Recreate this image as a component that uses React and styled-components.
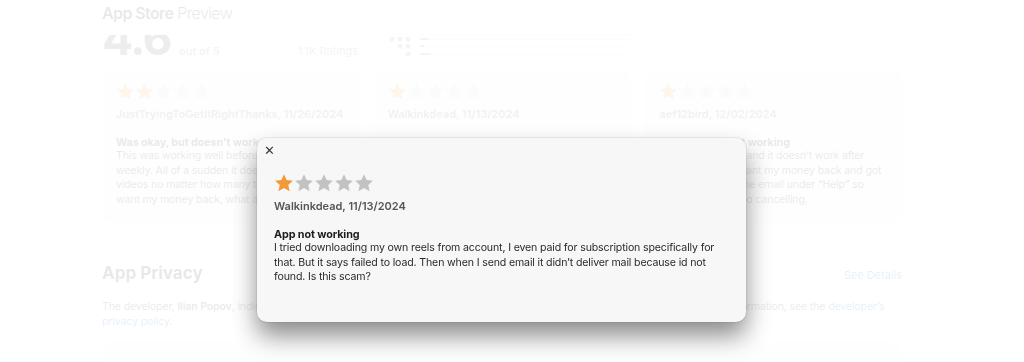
import React from 'react'
import styled, { createGlobalStyle } from 'styled-components'

const GlobalStyle = createGlobalStyle`
  html, body {
    margin: 0;
    padding: 0;
    background: #ffffff;
    font-family: Inter, "Noto Sans", "Liberation Sans", sans-serif;
    color: #1d1d1f;
    overflow: hidden;
  }
`

const reviews = [
  {
    rating: 2,
    name: 'JustTryingToGetItRightThanks, 11/26/2024',
    title: "Was okay, but doesn't work anymore",
    body: "This was working well before, I paid for it weekly. All of a sudden it doesn't download videos no matter how many times I tried, so I want my money back, what a waste of money.",
  },
  {
    rating: 1,
    name: 'Walkinkdead, 11/13/2024',
    title: 'App not working',
    body: 'I tried downloading my own reels from account, I even paid for subscription specifically for that. But it says failed to load.',
  },
  {
    rating: 1,
    name: 'aef12bird, 12/02/2024',
    title: 'Charged and not working',
    body: 'I paid for this app and it doesn\u2019t work after updating it. So I want my money back and got a reply to check the email under \u201cHelp\u201d so wrote them. Still no cancelling.',
  },
]

const histogram = [
  { stars: 5, value: 78 },
  { stars: 4, value: 8 },
  { stars: 3, value: 4 },
  { stars: 2, value: 2 },
  { stars: 1, value: 5 },
]

function Star({ size, color }) {
  return (
    <svg width={size} height={size} viewBox="0 0 24 24">
      <path
        fill={color}
        d="M12 1.6l3.2 6.9 7.5.8-5.6 5.1 1.6 7.4L12 18l-6.7 3.8 1.6-7.4-5.6-5.1 7.5-.8z"
      />
    </svg>
  )
}

function Stars({ rating, size, on, off }) {
  return (
    <StarRow>
      {[1, 2, 3, 4, 5].map((i) => (
        <Star key={i} size={size} color={i <= rating ? on : off} />
      ))}
    </StarRow>
  )
}

function App() {
  const modal = reviews[1]
  return (
    <>
      <GlobalStyle />
      <Header>
        <HeaderTitle>
          <b>App Store</b> Preview
        </HeaderTitle>
      </Header>

      <Main>
        <Summary>
          <ScoreBlock>
            <Score>
              <Big>4.6</Big>
              <OutOf>out of 5</OutOf>
            </Score>
            <Count>1.1K Ratings</Count>
          </ScoreBlock>
          <Histogram>
            {histogram.map((row) => (
              <HistRow key={row.stars}>
                <HistStars>
                  {Array.from({ length: row.stars }).map((_, i) => (
                    <Star key={i} size={8} color="#8e8e93" />
                  ))}
                </HistStars>
                <Track>
                  <Fill style={{ width: row.value + '%' }} />
                </Track>
              </HistRow>
            ))}
          </Histogram>
        </Summary>

        <Cards>
          {reviews.map((r) => (
            <Card key={r.name}>
              <Stars rating={r.rating} size={19} on="#f19a37" off="#d1d1d6" />
              <Author>{r.name}</Author>
              <ReviewTitle>{r.title}</ReviewTitle>
              <ReviewBody>{r.body}</ReviewBody>
            </Card>
          ))}
        </Cards>

        <Privacy>
          <SectionHead>
            <SectionTitle>App Privacy</SectionTitle>
            <Link>See Details</Link>
          </SectionHead>
          <Paragraph>
            The developer, <strong>Ilian Popov</strong>, indicated that the app’s privacy
            practices may include handling of data as described below. For more
            information, see the <Link>developer’s privacy policy</Link>.
          </Paragraph>
          <PrivacyCard />
        </Privacy>
      </Main>

      <Overlay>
        <Modal>
          <Close>✕</Close>
          <ModalBody>
            <Stars rating={modal.rating} size={20} on="#f19a37" off="#c2c2c2" />
            <ModalAuthor>{modal.name}</ModalAuthor>
            <ModalTitle>{modal.title}</ModalTitle>
            <ModalText>
              I tried downloading my own reels from account, I even paid for subscription
              specifically for that. But it says failed to load. Then when I send email it
              didn’t deliver mail because id not found. Is this scam?
            </ModalText>
          </ModalBody>
        </Modal>
      </Overlay>
    </>
  )
}

const Header = styled.header`
  position: fixed;
  top: 0;
  left: 0;
  right: 0;
  height: 34px;
  background: #ffffff;
  border-bottom: 1px solid #e8e8ed;
  z-index: 2;
  display: flex;
  align-items: center;
  padding-left: 102px;
`

const HeaderTitle = styled.div`
  font-size: 16px;
  font-weight: 300;
  letter-spacing: -0.6px;
  color: #1d1d1f;
  margin-top: -8px;
  b {
    font-weight: 600;
  }
`

const Main = styled.main`
  width: 800px;
  margin-left: 102px;
  padding-top: 16px;
`

const Summary = styled.section`
  display: flex;
  align-items: flex-start;
  gap: 30px;
  height: 55px;
`

const ScoreBlock = styled.div`
  width: 256px;
  height: 42px;
  display: flex;
  justify-content: space-between;
  align-items: flex-end;
`

const Score = styled.div`
  display: flex;
  align-items: baseline;
  gap: 8px;
`

const Big = styled.span`
  font-size: 46px;
  font-weight: 700;
  letter-spacing: -1.5px;
  line-height: 0.8;
  color: #4a4a4e;
`

const OutOf = styled.span`
  font-size: 11px;
  font-weight: 600;
  color: #8a8a8e;
`

const Count = styled.span`
  font-size: 11px;
  color: #8a8a8e;
`

const Histogram = styled.div`
  width: 242px;
  display: flex;
  flex-direction: column;
  margin-top: 4px;
`

const HistRow = styled.div`
  display: flex;
  align-items: center;
  gap: 8px;
  height: 7.5px;
`

const HistStars = styled.div`
  width: 24px;
  display: flex;
  justify-content: flex-end;
`

const Track = styled.div`
  flex: 1;
  height: 2px;
  background: #e8e8ed;
  border-radius: 1px;
`

const Fill = styled.div`
  height: 100%;
  background: #8e8e93;
`

const Cards = styled.section`
  display: grid;
  grid-template-columns: repeat(3, 1fr);
  gap: 15px;
`

const Card = styled.article`
  height: 151px;
  box-sizing: border-box;
  background: #f5f5f7;
  border-radius: 8px;
  padding: 11px 14px;
  overflow: hidden;
`

const StarRow = styled.div`
  display: flex;
`

const Author = styled.div`
  font-size: 11px;
  font-weight: 600;
  color: #6e6e73;
  margin-top: 6px;
`

const ReviewTitle = styled.div`
  font-size: 10.8px;
  font-weight: 700;
  letter-spacing: -0.1px;
  color: #1d1d1f;
  margin-top: 15px;
`

const ReviewBody = styled.p`
  margin: 0;
  font-size: 10.6px;
  letter-spacing: -0.15px;
  line-height: 14.7px;
  color: #1d1d1f;
`

const Privacy = styled.section`
  margin-top: 41px;
`

const SectionHead = styled.div`
  display: flex;
  justify-content: space-between;
  align-items: baseline;
`

const SectionTitle = styled.h2`
  margin: 0;
  font-size: 17px;
  font-weight: 700;
  color: #1d1d1f;
`

const Link = styled.a`
  color: #0066cc;
  font-size: 11px;
`

const Paragraph = styled.p`
  margin: 16px 0 0;
  font-size: 10.6px;
  letter-spacing: -0.15px;
  line-height: 15px;
  color: #333336;
  strong {
    font-weight: 600;
  }
  ${Link} {
    font-size: inherit;
  }
`

const PrivacyCard = styled.div`
  margin-top: 12px;
  height: 80px;
  background: #f5f5f7;
  border-radius: 14px;
`

const Overlay = styled.div`
  position: fixed;
  inset: 0;
  z-index: 5;
  background: rgba(255, 255, 255, 0.9);
`

const Modal = styled.div`
  position: absolute;
  left: 257px;
  top: 138px;
  width: 489px;
  height: 184px;
  box-sizing: border-box;
  background: #f7f7f7;
  border-radius: 10px;
  box-shadow: 0 0 0 1px rgba(0, 0, 0, 0.06), 0 14px 24px rgba(0, 0, 0, 0.45);
`

const Close = styled.span`
  position: absolute;
  left: 7px;
  top: 5px;
  font-size: 13px;
  font-weight: 700;
  color: #3a3a3c;
  font-family: "DejaVu Sans", sans-serif;
`

const ModalBody = styled.div`
  padding: 35px 17px 0;
`

const ModalAuthor = styled.div`
  font-size: 11px;
  font-weight: 600;
  color: #555558;
  margin-top: 6px;
`

const ModalTitle = styled.div`
  font-size: 10.8px;
  font-weight: 700;
  letter-spacing: -0.1px;
  color: #1d1d1f;
  margin-top: 15px;
`

const ModalText = styled.p`
  margin: 0;
  font-size: 10.6px;
  letter-spacing: -0.15px;
  line-height: 14.6px;
  color: #2a2a2c;
`

export default App
